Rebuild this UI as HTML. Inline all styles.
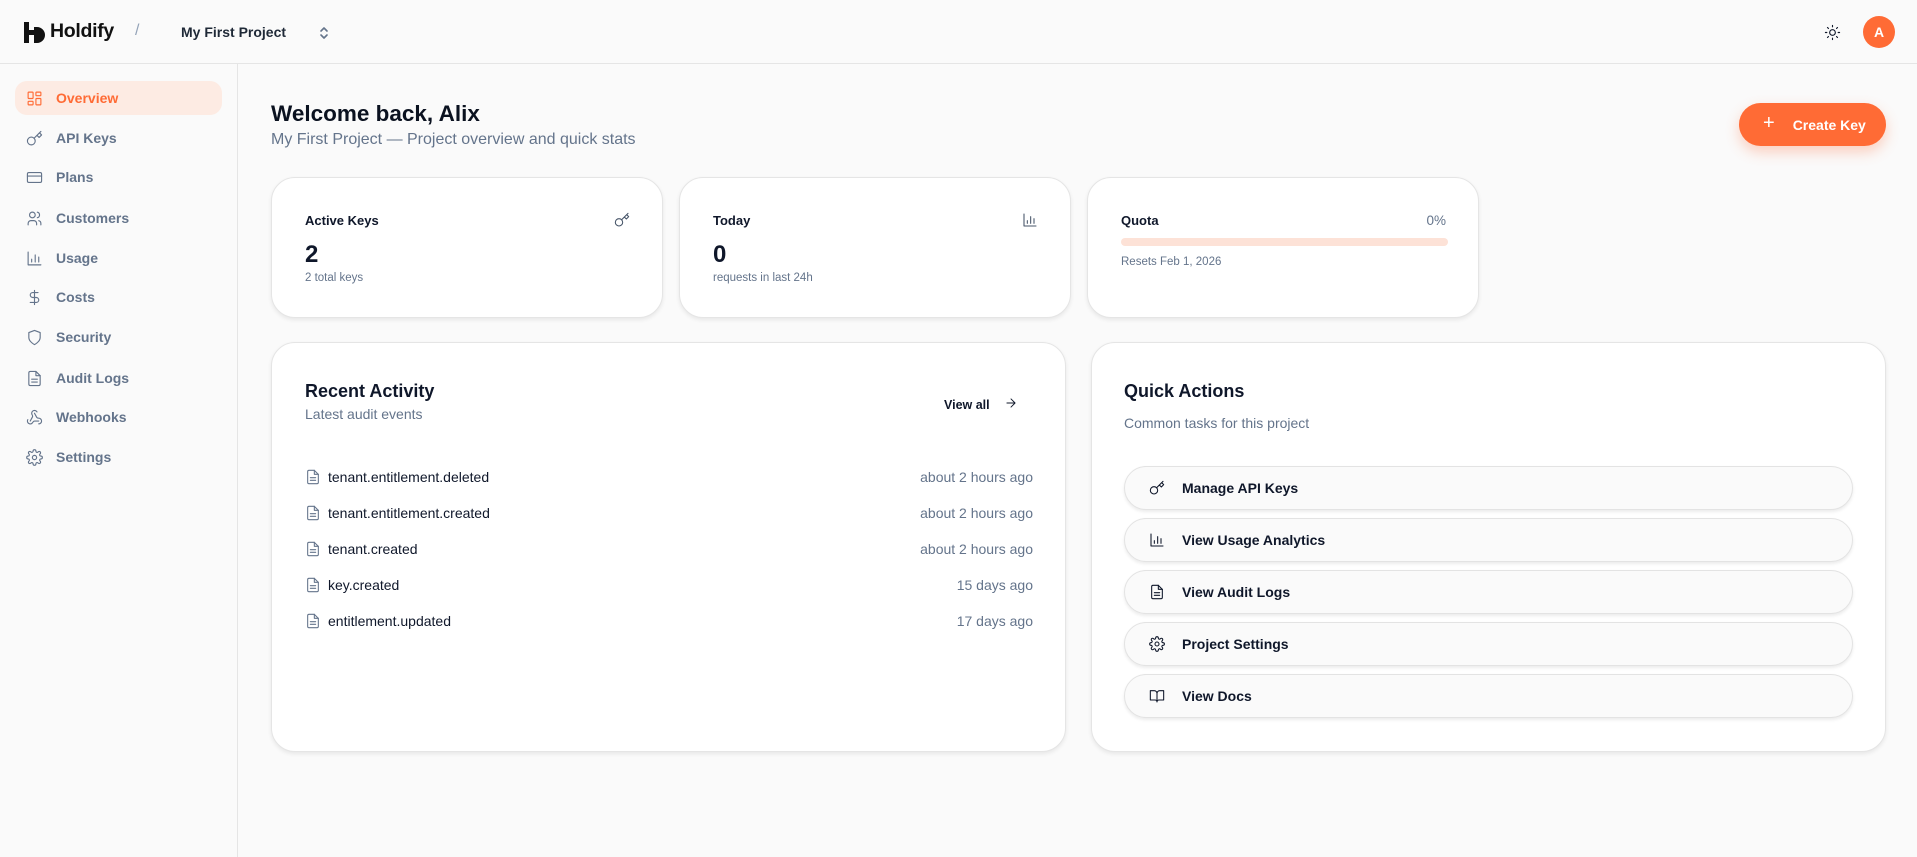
<!DOCTYPE html>
<html><head><meta charset="utf-8"><style>
*{box-sizing:border-box;margin:0;padding:0}
body{width:1917px;height:857px;background:#fafafa;font-family:"Liberation Sans",sans-serif;color:#0f172a;position:relative;overflow:hidden}
.a{position:absolute}
.hdr{left:0;top:0;width:1917px;height:64px;border-bottom:1px solid #e5e5e5;background:#fafafa}
.side{left:0;top:64px;width:238px;height:793px;border-right:1px solid #e5e5e5}
.nav{position:absolute;left:15px;width:207px;height:34px;border-radius:12px;display:flex;align-items:center;padding-left:11px;font-size:14px;color:#64748b;font-weight:bold}
.nav svg{width:17px;height:17px;margin-right:13px;stroke:#64748b;fill:none;stroke-width:1.6;stroke-linecap:round;stroke-linejoin:round}
.nav.on{background:#fdebe3;color:#ff6b35}
.nav.on svg{stroke:#ff6b35}
.card{background:#fff;border:1px solid #e5e5e5;border-radius:24px;box-shadow:0 2px 4px rgba(0,0,0,.08)}
.ct{font-size:13px;font-weight:bold;color:#0f172a}
.sm{font-size:11.5px;color:#64748b}
.ico{fill:none;stroke:#0f172a;stroke-width:1.6;stroke-linecap:round;stroke-linejoin:round}
.row{position:absolute;left:33px;right:32px;height:24px;display:flex;align-items:center;font-size:14px}
.row svg{width:16px;height:16px;margin-right:7px;stroke:#64748b}
.row .t{margin-left:auto;color:#64748b}
.qa{position:absolute;left:32px;right:32px;height:44px;border:1px solid #e3e3e3;border-radius:22px;background:#fafafa;box-shadow:0 2px 3px rgba(0,0,0,.08);display:flex;align-items:center;padding-left:24px;font-size:14px;font-weight:bold}
.qa svg{width:16px;height:16px;margin-right:17px}
</style></head><body>
<div class="a hdr">
  <svg class="a" style="left:23px;top:21px" width="24" height="22" viewBox="0 0 24 22"><path d="M1 1h5v8h5V6h3a8 8 0 0 1 0 16h-3v-8H6v8H1z" fill="#111"/></svg>
  <div class="a" style="left:50px;top:20px;font-size:19.5px;font-weight:bold;color:#111;letter-spacing:-.3px">Holdify</div>
  <div class="a" style="left:135px;top:22px;font-size:16px;color:#94a3b8">/</div>
  <div class="a" style="left:181px;top:24px;font-size:14px;font-weight:bold;color:#1f2937">My First Project</div>
  <svg class="a ico" style="left:318px;top:25px;stroke:#64748b" width="12" height="16" viewBox="0 0 12 16"><path d="M3 6l3-3 3 3M3 10l3 3 3-3"/></svg>
  <svg class="a ico" style="left:1824px;top:24px" width="17" height="17" viewBox="0 0 24 24"><circle cx="12" cy="12" r="4"/><path d="M12 2v2M12 20v2M4.9 4.9l1.4 1.4M17.7 17.7l1.4 1.4M2 12h2M20 12h2M4.9 19.1l1.4-1.4M17.7 6.3l1.4-1.4"/></svg>
  <div class="a" style="left:1863px;top:16px;width:32px;height:32px;border-radius:50%;background:#ff6b35;color:#fff;font-size:14px;font-weight:bold;display:flex;align-items:center;justify-content:center">A</div>
</div>
<div class="a side">
  <div class="nav on" style="top:17px"><svg viewBox="0 0 24 24"><rect x="3" y="3" width="7" height="9" rx="1"/><rect x="14" y="3" width="7" height="5" rx="1"/><rect x="14" y="12" width="7" height="9" rx="1"/><rect x="3" y="16" width="7" height="5" rx="1"/></svg>Overview</div>
  <div class="nav" style="top:57px"><svg viewBox="0 0 24 24"><circle cx="7.5" cy="15.5" r="5.5"/><path d="M21 2l-9.6 9.6M15.5 7.5l3 3L22 7l-3-3"/></svg>API Keys</div>
  <div class="nav" style="top:96px"><svg viewBox="0 0 24 24"><rect x="2" y="5" width="20" height="14" rx="2"/><path d="M2 10h20"/></svg>Plans</div>
  <div class="nav" style="top:137px"><svg viewBox="0 0 24 24"><circle cx="9" cy="7" r="4"/><path d="M3 21v-2a4 4 0 0 1 4-4h4a4 4 0 0 1 4 4v2M16 3.1a4 4 0 0 1 0 7.8M21 21v-2a4 4 0 0 0-3-3.9"/></svg>Customers</div>
  <div class="nav" style="top:177px"><svg viewBox="0 0 24 24"><path d="M3 3v18h18M8 17v-4M13 17V7M18 17v-7"/></svg>Usage</div>
  <div class="nav" style="top:216px"><svg viewBox="0 0 24 24"><path d="M12 2v20M17 5H9.5a3.5 3.5 0 0 0 0 7h5a3.5 3.5 0 0 1 0 7H6"/></svg>Costs</div>
  <div class="nav" style="top:256px"><svg viewBox="0 0 24 24"><path d="M12 22s8-4 8-10V5l-8-3-8 3v7c0 6 8 10 8 10z"/></svg>Security</div>
  <div class="nav" style="top:297px"><svg viewBox="0 0 24 24"><path d="M14 2H6a2 2 0 0 0-2 2v16a2 2 0 0 0 2 2h12a2 2 0 0 0 2-2V8z"/><path d="M14 2v6h6M8 13h8M8 17h8"/></svg>Audit Logs</div>
  <div class="nav" style="top:336px"><svg viewBox="0 0 24 24"><path d="M18 16.98h-5.99c-1.1 0-1.95.94-2.480 1.9A4 4 0 0 1 2 17c.01-.7.2-1.4.57-2M6 17l3.13-5.78c.53-.97.1-2.18-.5-3.1a4 4 0 1 1 6.89-4.06M12 6l3.13 5.73C15.66 12.7 16.9 13 18 13a4 4 0 0 1 0 8"/></svg>Webhooks</div>
  <div class="nav" style="top:376px"><svg viewBox="0 0 24 24"><circle cx="12" cy="12" r="3"/><path d="M19.4 15a1.7 1.7 0 0 0 .3 1.8l.1.1a2 2 0 1 1-2.8 2.8l-.1-.1a1.7 1.7 0 0 0-2.9 1.2V21a2 2 0 1 1-4 0v-.1a1.7 1.7 0 0 0-2.9-1.2l-.1.1a2 2 0 1 1-2.8-2.8l.1-.1A1.7 1.7 0 0 0 3 14H3a2 2 0 1 1 0-4h.1a1.7 1.7 0 0 0 1.2-2.9l-.1-.1a2 2 0 1 1 2.8-2.8l.1.1A1.7 1.7 0 0 0 10 3V3a2 2 0 1 1 4 0v.1a1.7 1.7 0 0 0 2.9 1.2l.1-.1a2 2 0 1 1 2.8 2.8l-.1.1A1.7 1.7 0 0 0 21 10h.1a2 2 0 1 1 0 4h-.1a1.7 1.7 0 0 0-1.6 1z"/></svg>Settings</div>
</div>

<div class="a" style="left:271px;top:101px;font-size:22.5px;font-weight:bold;color:#0b1220">Welcome back, Alix</div>
<div class="a" style="left:271px;top:131px;font-size:16px;color:#64748b">My First Project — Project overview and quick stats</div>
<div class="a" style="left:1739px;top:103px;width:147px;height:43px;border-radius:22px;background:#ff6b35;color:#fff;font-size:14px;font-weight:bold;display:flex;align-items:center;padding-left:24px;box-shadow:0 6px 14px rgba(255,107,53,.3)"><span style="font-size:20px;font-weight:normal;margin-right:18px;margin-top:-2px">+</span>Create Key</div>

<div class="a card" style="left:271px;top:177px;width:392px;height:141px">
  <div class="a ct" style="left:33px;top:35px">Active Keys</div>
  <svg class="a ico" style="left:342px;top:34px;stroke:#475569" width="16" height="16" viewBox="0 0 24 24"><circle cx="7.5" cy="15.5" r="5.5"/><path d="M21 2l-9.6 9.6M15.5 7.5l3 3L22 7l-3-3"/></svg>
  <div class="a" style="left:33px;top:63px;font-size:24px;font-weight:bold">2</div>
  <div class="a sm" style="left:33px;top:94px">2 total keys</div>
</div>
<div class="a card" style="left:679px;top:177px;width:392px;height:141px">
  <div class="a ct" style="left:33px;top:35px">Today</div>
  <svg class="a ico" style="left:342px;top:34px;stroke:#475569" width="16" height="16" viewBox="0 0 24 24"><path d="M3 3v18h18M8 17v-4M13 17V7M18 17v-7"/></svg>
  <div class="a" style="left:33px;top:63px;font-size:24px;font-weight:bold">0</div>
  <div class="a sm" style="left:33px;top:94px">requests in last 24h</div>
</div>
<div class="a card" style="left:1087px;top:177px;width:392px;height:141px">
  <div class="a ct" style="left:33px;top:35px">Quota</div>
  <div class="a" style="right:32px;top:35px;font-size:13.5px;color:#64748b">0%</div>
  <div class="a" style="left:33px;top:60px;width:327px;height:8px;border-radius:4px;background:#fde2d7"></div>
  <div class="a sm" style="left:33px;top:78px">Resets Feb 1, 2026</div>
</div>

<div class="a card" style="left:271px;top:342px;width:795px;height:410px">
  <div class="a" style="left:33px;top:38px;font-size:18px;font-weight:bold">Recent Activity</div>
  <div class="a" style="left:33px;top:63px;font-size:14px;color:#64748b">Latest audit events</div>
  <div class="a" style="left:672px;top:55px;font-size:12.5px;font-weight:bold">View all</div>
  <svg class="a ico" style="left:732px;top:53px" width="14" height="14" viewBox="0 0 24 24"><path d="M5 12h14M12 5l7 7-7 7"/></svg>
  <div class="row" style="top:122px"><svg class="ico" viewBox="0 0 24 24"><path d="M14 2H6a2 2 0 0 0-2 2v16a2 2 0 0 0 2 2h12a2 2 0 0 0 2-2V8z"/><path d="M14 2v6h6M8 13h8M8 17h8"/></svg>tenant.entitlement.deleted<span class="t">about 2 hours ago</span></div>
  <div class="row" style="top:158px"><svg class="ico" viewBox="0 0 24 24"><path d="M14 2H6a2 2 0 0 0-2 2v16a2 2 0 0 0 2 2h12a2 2 0 0 0 2-2V8z"/><path d="M14 2v6h6M8 13h8M8 17h8"/></svg>tenant.entitlement.created<span class="t">about 2 hours ago</span></div>
  <div class="row" style="top:194px"><svg class="ico" viewBox="0 0 24 24"><path d="M14 2H6a2 2 0 0 0-2 2v16a2 2 0 0 0 2 2h12a2 2 0 0 0 2-2V8z"/><path d="M14 2v6h6M8 13h8M8 17h8"/></svg>tenant.created<span class="t">about 2 hours ago</span></div>
  <div class="row" style="top:230px"><svg class="ico" viewBox="0 0 24 24"><path d="M14 2H6a2 2 0 0 0-2 2v16a2 2 0 0 0 2 2h12a2 2 0 0 0 2-2V8z"/><path d="M14 2v6h6M8 13h8M8 17h8"/></svg>key.created<span class="t">15 days ago</span></div>
  <div class="row" style="top:266px"><svg class="ico" viewBox="0 0 24 24"><path d="M14 2H6a2 2 0 0 0-2 2v16a2 2 0 0 0 2 2h12a2 2 0 0 0 2-2V8z"/><path d="M14 2v6h6M8 13h8M8 17h8"/></svg>entitlement.updated<span class="t">17 days ago</span></div>
</div>

<div class="a card" style="left:1091px;top:342px;width:795px;height:410px">
  <div class="a" style="left:32px;top:38px;font-size:18px;font-weight:bold">Quick Actions</div>
  <div class="a" style="left:32px;top:72px;font-size:14px;color:#64748b">Common tasks for this project</div>
  <div class="qa" style="top:123px"><svg class="ico" viewBox="0 0 24 24"><circle cx="7.5" cy="15.5" r="5.5"/><path d="M21 2l-9.6 9.6M15.5 7.5l3 3L22 7l-3-3"/></svg>Manage API Keys</div>
  <div class="qa" style="top:175px"><svg class="ico" viewBox="0 0 24 24"><path d="M3 3v18h18M8 17v-4M13 17V7M18 17v-7"/></svg>View Usage Analytics</div>
  <div class="qa" style="top:227px"><svg class="ico" viewBox="0 0 24 24"><path d="M14 2H6a2 2 0 0 0-2 2v16a2 2 0 0 0 2 2h12a2 2 0 0 0 2-2V8z"/><path d="M14 2v6h6M8 13h8M8 17h8"/></svg>View Audit Logs</div>
  <div class="qa" style="top:279px"><svg class="ico" viewBox="0 0 24 24"><circle cx="12" cy="12" r="3"/><path d="M19.4 15a1.7 1.7 0 0 0 .3 1.8l.1.1a2 2 0 1 1-2.8 2.8l-.1-.1a1.7 1.7 0 0 0-2.9 1.2V21a2 2 0 1 1-4 0v-.1a1.7 1.7 0 0 0-2.9-1.2l-.1.1a2 2 0 1 1-2.8-2.8l.1-.1A1.7 1.7 0 0 0 3 14H3a2 2 0 1 1 0-4h.1a1.7 1.7 0 0 0 1.2-2.9l-.1-.1a2 2 0 1 1 2.8-2.8l.1.1A1.7 1.7 0 0 0 10 3V3a2 2 0 1 1 4 0v.1a1.7 1.7 0 0 0 2.9 1.2l.1-.1a2 2 0 1 1 2.8 2.8l-.1.1A1.7 1.7 0 0 0 21 10h.1a2 2 0 1 1 0 4h-.1a1.7 1.7 0 0 0-1.6 1z"/></svg>Project Settings</div>
  <div class="qa" style="top:331px"><svg class="ico" viewBox="0 0 24 24"><path d="M2 4h6a4 4 0 0 1 4 4v13a3 3 0 0 0-3-3H2zM22 4h-6a4 4 0 0 0-4 4v13a3 3 0 0 1 3-3h7z"/></svg>View Docs</div>
</div>
</body></html>
